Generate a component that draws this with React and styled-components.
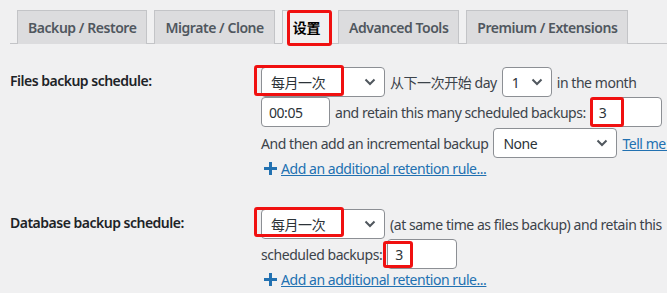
import React from 'react';
import styled, { createGlobalStyle } from 'styled-components';

const Global = createGlobalStyle`
  body {
    margin: 0;
    background: #f0f0f1;
    font-family: "Noto Sans", "Noto Sans CJK SC", sans-serif;
    font-size: 14px;
    letter-spacing: -0.45px;
    color: #3c434a;
  }
`

const Page = styled.div`
  padding: 10px 0 0 10px;
  width: 657px;
  overflow: hidden;
`

const TabBar = styled.div`
  display: flex;
  gap: 7px;
  padding-left: 7px;
  border-bottom: 1px solid #c3c4c7;
  height: 33px;
`

const Tab = styled.div`
  position: relative;
  flex: none;
  height: 34px;
  box-sizing: border-box;
  padding: 5px 10px;
  line-height: 24px;
  font-size: 14px;
  font-weight: 600;
  letter-spacing: -0.45px;
  white-space: nowrap;
  border: 1px solid #c3c4c7;
  border-bottom: ${p => (p.$active ? '1px solid #f0f0f1' : 'none')};
  background: ${p => (p.$active ? '#f0f0f1' : '#dcdcde')};
  color: ${p => (p.$active ? '#000' : '#50575e')};
`

const Marked = styled.span`
  position: relative;
  display: inline-flex;
  &::after {
    content: '';
    position: absolute;
    left: ${p => p.$l}px;
    top: ${p => p.$t}px;
    width: ${p => p.$w}px;
    height: ${p => p.$h}px;
    border: 3px solid #f01010;
    border-radius: 3px;
    box-sizing: border-box;
    pointer-events: none;
  }
`

const Section = styled.div`
  display: grid;
  grid-template-columns: 251px 1fr;
  margin-top: ${p => p.$top}px;
`

const Label = styled.div`
  font-weight: 600;
  letter-spacing: -0.5px;
  color: #1d2327;
  padding-top: ${p => p.$pt}px;
  white-space: nowrap;
`

const Field = styled.div`
  display: flex;
  flex-direction: column;
`

const Line = styled.div`
  display: flex;
  align-items: center;
  gap: 5px;
  white-space: nowrap;
  height: ${p => p.$h || 30}px;
  margin-bottom: ${p => p.$mb || 0}px;
`

const SelectBox = styled.div`
  display: flex;
  align-items: center;
  justify-content: space-between;
  box-sizing: border-box;
  width: ${p => p.$w}px;
  height: 30px;
  padding: 0 8px 0 9px;
  background: #fff;
  border: 1px solid #8c8f94;
  border-radius: 4px;
  color: #2c3338;
`

const InputBox = styled.div`
  display: flex;
  align-items: center;
  box-sizing: border-box;
  width: ${p => p.$w}px;
  height: 30px;
  padding: 0 7px;
  background: #fff;
  border: 1px solid #8c8f94;
  border-radius: 4px;
  color: #2c3338;
`

const Link = styled.a`
  color: #2271b1;
  text-decoration: underline;
`

const AddLink = styled.div`
  display: flex;
  align-items: center;
  gap: 4px;
  padding-left: 3px;
  height: 20px;
`

const Chevron = () => (
  <svg width="12" height="8" viewBox="0 0 12 8">
    <path d="M1.5 1.5 L6 6 L10.5 1.5" fill="none" stroke="#50575e" strokeWidth="2" />
  </svg>
)

const Plus = () => (
  <svg width="13" height="13" viewBox="0 0 13 13">
    <path d="M5 0h3v5h5v3H8v5H5V8H0V5h5z" fill="#2271b1" />
  </svg>
)

const Select = ({ w, children }) => (
  <SelectBox $w={w}>
    <span>{children}</span>
    <Chevron />
  </SelectBox>
)

export default function App() {
  return (
    <Page>
      <Global />
      <TabBar>
        <Tab>Backup / Restore</Tab>
        <Tab>Migrate / Clone</Tab>
        <Tab $active>
          <Marked $l={-6} $t={-6} $w={45} $h={36}>设置</Marked>
        </Tab>
        <Tab>Advanced Tools</Tab>
        <Tab>Premium / Extensions</Tab>
      </TabBar>

      <Section $top={23}>
        <Label $pt={4}>Files backup schedule:</Label>
        <Field>
          <Line>
            <Marked $l={-7} $t={-2} $w={90} $h={31}>
              <Select w={124}>每月一次</Select>
            </Marked>
            <span>从下一次开始 day</span>
            <Select w={50}>1</Select>
            <span>in the month</span>
          </Line>
          <Line $mb={1}>
            <InputBox $w={69}>00:05</InputBox>
            <span>and retain this many scheduled backups:</span>
            <Marked $l={-1} $t={0} $w={34} $h={30}>
              <InputBox $w={71}>3</InputBox>
            </Marked>
          </Line>
          <Line>
            <span>And then add an incremental backup</span>
            <Select w={124}>None</Select>
            <Link>Tell me more</Link>
          </Line>
          <AddLink>
            <Plus />
            <Link>Add an additional retention rule...</Link>
          </AddLink>
        </Field>
      </Section>

      <Section $top={31}>
        <Label $pt={4}>Database backup schedule:</Label>
        <Field>
          <Line>
            <Marked $l={-7} $t={-2} $w={90} $h={30}>
              <Select w={124}>每月一次</Select>
            </Marked>
            <span>(at same time as files backup) and retain this</span>
          </Line>
          <Line>
            <span>scheduled backups:</span>
            <Marked $l={-4} $t={2} $w={30} $h={27}>
              <InputBox $w={70}>3</InputBox>
            </Marked>
          </Line>
          <AddLink>
            <Plus />
            <Link>Add an additional retention rule...</Link>
          </AddLink>
        </Field>
      </Section>
    </Page>
  );
}
